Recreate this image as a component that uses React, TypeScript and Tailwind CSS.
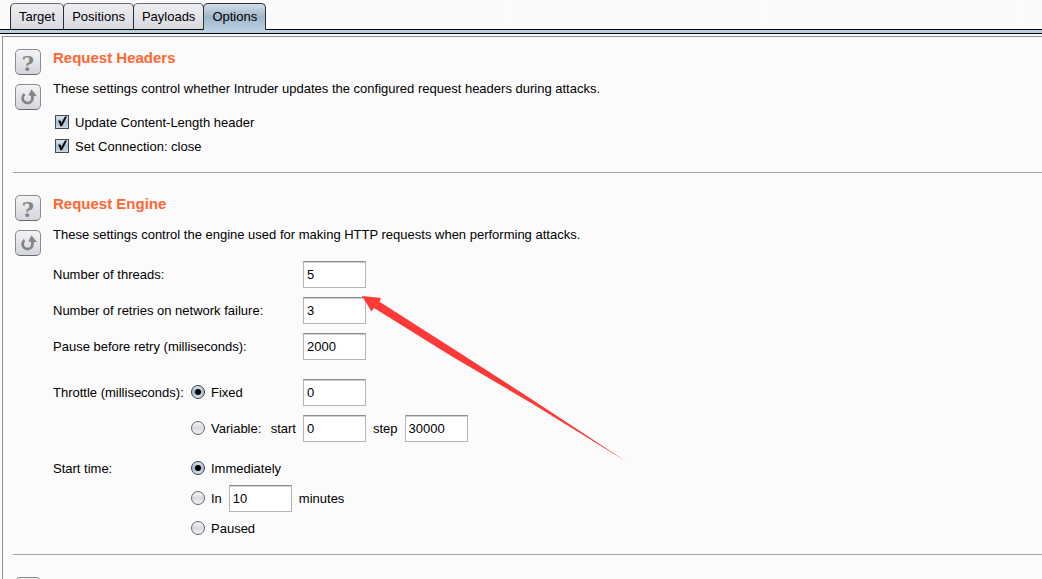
import React, { useState } from 'react';

const tabs = ['Target', 'Positions', 'Payloads', 'Options'];

const iconButton =
  'grid h-[26px] w-[26px] place-items-center overflow-hidden rounded-[5px] border border-[#8b8b8f] border-b-[#66686d] bg-linear-to-b from-[#f3f3f5] via-[#e4e5ea] to-[#d3d5dc] text-[#858585]';

const HelpButton: React.FC = () => (
  <button type="button" aria-label="Help" className={iconButton}>
    <span className="pt-0.5 font-['DejaVu_Serif',serif] text-[21px] leading-[24px] font-bold">?</span>
  </button>
);

const ResetButton: React.FC = () => (
  <button type="button" aria-label="Restore defaults" className={iconButton}>
    <svg width="24" height="24" viewBox="0 0 24 24" fill="none">
      <path
        d="M8.6 9.2 C6.2 11 6 14.2 7.6 16.2 C9.6 18.7 13.6 18.6 15.4 16.2 C16.5 14.6 16.8 12.4 16.2 9.5"
        stroke="currentColor"
        strokeWidth="2.7"
      />
      <path d="M15.4 4.2 L21 11.2 L12.4 10.4 Z" fill="currentColor" />
    </svg>
  </button>
);

interface SectionProps {
  title: string;
  description: string;
  className: string;
  children: React.ReactNode;
}

const Section: React.FC<SectionProps> = ({ title, description, className, children }) => (
  <section className={`flex gap-3 border-b border-[#a2a3b0] pl-0.5 ${className}`}>
    <div className="flex flex-col gap-[9px]">
      <HelpButton />
      <ResetButton />
    </div>
    <div>
      <h2 className="text-[15px] leading-[18px] font-bold text-[#ff6633]">{title}</h2>
      <p className="mt-[11px] leading-[22px]">{description}</p>
      {children}
    </div>
  </section>
);

const Check: React.FC<{ label: string }> = ({ label }) => (
  <label className="flex h-6 items-center gap-1.5 pl-0.5">
    <span className="relative mb-0.5 h-[14px] w-[14px]">
      <input
        type="checkbox"
        defaultChecked
        className="peer block h-[14px] w-[14px] appearance-none border border-[#3f4a5a] bg-linear-to-b from-[#dbe5ee] via-[#a9bccd] to-[#c9dbea]"
      />
      <svg
        className="pointer-events-none absolute inset-0 hidden peer-checked:block"
        width="14"
        height="14"
        viewBox="0 0 14 14"
      >
        <path d="M3.2 5.6 L5.4 5.6 L6.4 8 L10 1.6 L12 1.6 L7 11.2 L5.4 11.2 Z" fill="#000" />
      </svg>
    </span>
    {label}
  </label>
);

interface RadioProps {
  name: string;
  label: string;
  checked: boolean;
  onSelect: () => void;
}

const Radio: React.FC<RadioProps> = ({ name, label, checked, onSelect }) => (
  <label className="flex items-center gap-1.5">
    <span className="relative mb-0.5 h-[14px] w-[14px]">
      <input
        type="radio"
        name={name}
        checked={checked}
        onChange={onSelect}
        className="peer block h-[14px] w-[14px] appearance-none rounded-full border border-[#63656b] bg-linear-to-b from-[#f4f4f6] via-[#d9dbe1] to-[#eef0f5] checked:border-[#35404f] checked:from-[#dce6ee] checked:via-[#a6b9ca] checked:to-[#d2e4f4]"
      />
      <span className="pointer-events-none absolute inset-1 hidden rounded-full bg-black peer-checked:block" />
    </span>
    {label}
  </label>
);

const NumberField: React.FC<{ id: string; value: string; label?: string }> = ({ id, value, label }) => (
  <input
    id={id}
    type="text"
    aria-label={label}
    defaultValue={value}
    className="h-[27px] w-[63px] border border-[#b4b4b4] border-t-[#8c8c8c] bg-white px-[3px] shadow-[inset_0_1px_0_#d0d0d0]"
  />
);

const App: React.FC = () => {
  const [activeTab, setActiveTab] = useState('Options');
  const [throttle, setThrottle] = useState('fixed');
  const [start, setStart] = useState('now');

  return (
    <div className="flex h-screen flex-col overflow-hidden bg-[#fbfbfb] font-['Liberation_Sans',Arial,sans-serif] text-[13px] text-black">
      <nav className="flex h-[34px] shrink-0 border-b border-black bg-linear-to-b from-[#fbfbfb] from-[29px] to-[#b9d0e2] to-[29px] pt-[3px]">
        <div className="flex h-[27px] grow">
          <div className="w-[10px] border-b border-black" />
          {tabs.map((tab) => (
            <button
              key={tab}
              type="button"
              onClick={() => setActiveTab(tab)}
              className={`-mr-px rounded-t-[5px] border border-[#2b2d38] px-2 ${
                tab === activeTab
                  ? 'z-10 border-b-0 bg-linear-to-b from-[#d3dfe9] via-[#9fb6c9] to-[#b9d0e2] pb-px'
                  : 'border-t-[#6d6f78] border-b-black bg-linear-to-b from-[#eeeef1] to-[#d8dae0]'
              }`}
            >
              {tab}
            </button>
          ))}
          <div className="grow border-b border-black" />
        </div>
      </nav>

      <main className="mt-0.5 ml-0.5 grow border-t border-l border-[#8f919f] pl-[10px]">
        <Section
          title="Request Headers"
          description="These settings control whether Intruder updates the configured request headers during attacks."
          className="pt-3 pb-[13px]"
        >
          <div className="mt-[11px]">
            <Check label="Update Content-Length header" />
            <Check label="Set Connection: close" />
          </div>
        </Section>

        <Section
          title="Request Engine"
          description="These settings control the engine used for making HTTP requests when performing attacks."
          className="pt-[22px] pb-[15px]"
        >
          <div className="relative mt-[15px]">
            <div className="grid grid-cols-[250px_auto] items-center justify-start gap-y-[9px]">
              <label htmlFor="threads">Number of threads:</label>
              <NumberField id="threads" value="5" />
              <label htmlFor="retries">Number of retries on network failure:</label>
              <NumberField id="retries" value="3" />
              <label htmlFor="pause">Pause before retry (milliseconds):</label>
              <NumberField id="pause" value="2000" />
            </div>

            <div className="mt-[19px] grid grid-cols-[138px_112px_auto] items-center justify-start gap-y-[9px]">
              <span>Throttle (milliseconds):</span>
              <Radio name="throttle" label="Fixed" checked={throttle === 'fixed'} onSelect={() => setThrottle('fixed')} />
              <NumberField id="fixed" value="0" label="Fixed throttle" />
              <div className="col-start-2 flex items-center justify-between pr-[7px]">
                <Radio
                  name="throttle"
                  label="Variable:"
                  checked={throttle === 'variable'}
                  onSelect={() => setThrottle('variable')}
                />
                <label htmlFor="var-start">start</label>
              </div>
              <div className="flex items-center gap-[7px]">
                <NumberField id="var-start" value="0" />
                <label htmlFor="var-step">step</label>
                <NumberField id="var-step" value="30000" />
              </div>
            </div>

            <div className="mt-4 grid grid-cols-[138px_auto] items-center justify-start gap-y-1.5 leading-[21px]">
              <span>Start time:</span>
              <Radio name="start" label="Immediately" checked={start === 'now'} onSelect={() => setStart('now')} />
              <div className="col-start-2 flex items-center gap-[7px]">
                <Radio name="start" label="In" checked={start === 'delay'} onSelect={() => setStart('delay')} />
                <NumberField id="delay" value="10" />
                <label htmlFor="delay">minutes</label>
              </div>
              <div className="col-start-2">
                <Radio name="start" label="Paused" checked={start === 'paused'} onSelect={() => setStart('paused')} />
              </div>
            </div>

            {/* arrow pointing at the thread count */}
            <svg
              className="pointer-events-none absolute top-[35px] left-[309px]"
              width="266"
              height="167"
              viewBox="0 0 266 167"
            >
              <path d="M0 0 L19 2 L17.5 5.8 L90 52 L170 103.5 L265 166 L170 107.5 L90 60.5 L12 12 L9.5 15.5 Z" fill="#ff3838" />
            </svg>
          </div>
        </Section>

        {/* next section, only its top edge is in view */}
        <section className="pt-[22px] pl-0.5">
          <button type="button" aria-label="Help" className={iconButton} />
        </section>
      </main>
    </div>
  );
};

export default App;
